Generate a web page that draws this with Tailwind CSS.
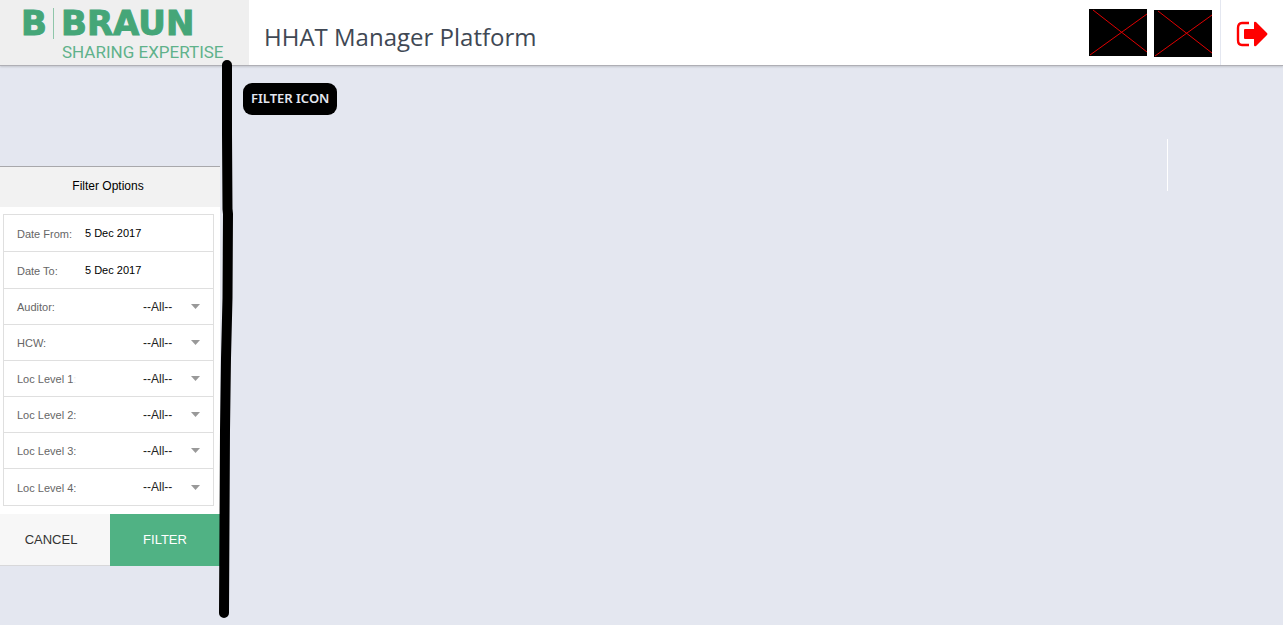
<!DOCTYPE html>
<html lang="en">
<head>
<meta charset="utf-8">
<meta name="viewport" content="width=device-width, initial-scale=1">
<title>HHAT Manager Platform</title>
<script src="https://cdn.jsdelivr.net/npm/@tailwindcss/browser@4"></script>
</head>
<body class="relative flex min-h-screen flex-col overflow-x-hidden bg-[#e4e7f0] font-['Liberation_Sans',sans-serif]">
<header class="relative flex h-[66px] items-stretch border-b border-[#afafb5] bg-white shadow-[0_1px_2px_rgba(0,0,0,0.15)]">
  <a href="#" aria-label="B Braun Sharing Expertise" class="block w-[249px] shrink-0 bg-[#efefef]">
    <svg width="249" height="65" viewBox="0 0 249 65" fill="#45a678">
      <g font-family="DejaVu Sans, sans-serif" font-weight="700" font-size="34" stroke="#45a678">
        <text x="21" y="35">B</text>
        <text x="61" y="35">BRAUN</text>
      </g>
      <path d="M53.500 8v31" stroke="#8fc6aa" fill="none"/>
      <text x="62" y="58" font-family="Roboto, sans-serif" font-size="17" fill="#5fb28b">SHARING EXPERTISE</text>
    </svg>
  </a>
  <h1 class="flex flex-1 items-center pt-2 pl-[15px] font-['Open_Sans',sans-serif] text-2xl text-[#404854]">HHAT Manager Platform</h1>
  <div class="flex items-start gap-[7px] pt-[9px] pr-2">
    <svg width="58" height="47" viewBox="0 0 58 47" stroke="#e00000" fill="none"><path d="M0 0h58v47H0z" fill="#000" stroke="none"/><path d="M4 1l54 42M1 46L58 5"/></svg>
    <svg class="mt-px" width="58" height="47" viewBox="0 0 58 47" stroke="#e00000" fill="none"><path d="M0 0h58v47H0z" fill="#000" stroke="none"/><path d="M4 1l54 42M1 46L58 5"/></svg>
  </div>
  <button type="button" aria-label="Log out" class="flex w-[63px] items-center justify-center border-l border-[#e4e7f0] pt-[2px]">
    <svg width="32" height="26" viewBox="0 0 32 26" fill="#f00"><path d="M13 2H6Q2 2 2 7v12q0 5 4 5h7" fill="none" stroke="#f00" stroke-width="2.400"/><path d="M8 9q0-1 1-1h9V2q0-2 2-1l11 11q1 1 0 2L20 25q-2 1-2-1v-6H9q-1 0-1-1z"/></svg>
  </button>
</header>

<div class="flex flex-1 items-start">
  <aside class="w-[220px] shrink-0 pt-[100px]">
    <form>
      <h2 class="flex h-[41px] items-center justify-center border-t border-[#a8a8ab] bg-[#f2f2f2] pr-1 pb-[2px] text-xs text-black">Filter Options</h2>
      <div class="bg-white pt-[7px] pr-[6px] pb-2 pl-[3px]">
        <div class="divide-y divide-[#dfdfdf] border border-[#dfdfdf] text-xs text-[#222]">
          <div class="flex h-[37px] items-center pl-[13px]"><label for="from" class="w-[68px] pt-[2px] text-[11px] text-[#666]">Date From:</label><input id="from" value="5 Dec 2017" class="w-24 text-[11px] text-black"></div>
          <div class="flex h-[37px] items-center pl-[13px]"><label for="to" class="w-[68px] pt-[2px] text-[11px] text-[#666]">Date To:</label><input id="to" value="5 Dec 2017" class="w-24 text-[11px] text-black"></div>
          <div class="flex h-9 items-center pr-[13px] pl-[13px]"><label for="auditor" class="flex-1 pt-[2px] text-[11px] text-[#666]">Auditor:</label><select id="auditor" class="w-12 appearance-none"><option>--All--</option></select><svg width="9" height="5" viewBox="0 0 9 5" fill="#999"><path d="M0 0h9L4.500 5z"/></svg></div>
          <div class="flex h-9 items-center pr-[13px] pl-[13px]"><label for="hcw" class="flex-1 pt-[2px] text-[11px] text-[#666]">HCW:</label><select id="hcw" class="w-12 appearance-none"><option>--All--</option></select><svg width="9" height="5" viewBox="0 0 9 5" fill="#999"><path d="M0 0h9L4.500 5z"/></svg></div>
          <div class="flex h-9 items-center pr-[13px] pl-[13px]"><label for="loc1" class="flex-1 pt-[2px] text-[11px] text-[#666]">Loc Level 1<span class="text-[#e8e8e8]">:</span></label><select id="loc1" class="w-12 appearance-none"><option>--All--</option></select><svg width="9" height="5" viewBox="0 0 9 5" fill="#999"><path d="M0 0h9L4.500 5z"/></svg></div>
          <div class="flex h-9 items-center pr-[13px] pl-[13px]"><label for="loc2" class="flex-1 pt-[2px] text-[11px] text-[#666]">Loc Level 2:</label><select id="loc2" class="w-12 appearance-none"><option>--All--</option></select><svg width="9" height="5" viewBox="0 0 9 5" fill="#999"><path d="M0 0h9L4.500 5z"/></svg></div>
          <div class="flex h-9 items-center pr-[13px] pl-[13px]"><label for="loc3" class="flex-1 pt-[2px] text-[11px] text-[#666]">Loc Level 3:</label><select id="loc3" class="w-12 appearance-none"><option>--All--</option></select><svg width="9" height="5" viewBox="0 0 9 5" fill="#999"><path d="M0 0h9L4.500 5z"/></svg></div>
          <div class="flex h-9 items-center pr-[13px] pl-[13px]"><label for="loc4" class="flex-1 pt-[2px] text-[11px] text-[#666]">Loc Level 4:</label><select id="loc4" class="w-12 appearance-none"><option>--All--</option></select><svg width="9" height="5" viewBox="0 0 9 5" fill="#999"><path d="M0 0h9L4.500 5z"/></svg></div>
        </div>
      </div>
      <div class="grid h-[52px] grid-cols-2 text-[13px]">
        <button type="button" class="border-b border-[#d8d8da] bg-[#f7f7f7] pr-2 text-[#333]">CANCEL</button>
        <button type="button" class="bg-[#50b284] text-white">FILTER</button>
      </div>
    </form>
  </aside>
  <main class="flex flex-1 items-start justify-between pt-[17px] pr-[115px] pl-[23px]">
    <button type="button" class="h-8 rounded-[9px] bg-black px-2 font-['Noto_Sans',sans-serif] text-[13px] font-semibold text-[#e4e7f0]">FILTER ICON</button>
    <div class="mt-14 h-[52px] w-px bg-white"></div>
  </main>
</div>

<svg class="pointer-events-none absolute top-[60px] left-[215px]" width="22" height="560" viewBox="0 0 22 560" fill="none" stroke="#000" stroke-width="10" stroke-linecap="round" stroke-linejoin="round"><path d="M12 5v69l.5 75 .5 5-.500 84-1.500 60L10 370 9 553"/></svg>
</body>
</html>
